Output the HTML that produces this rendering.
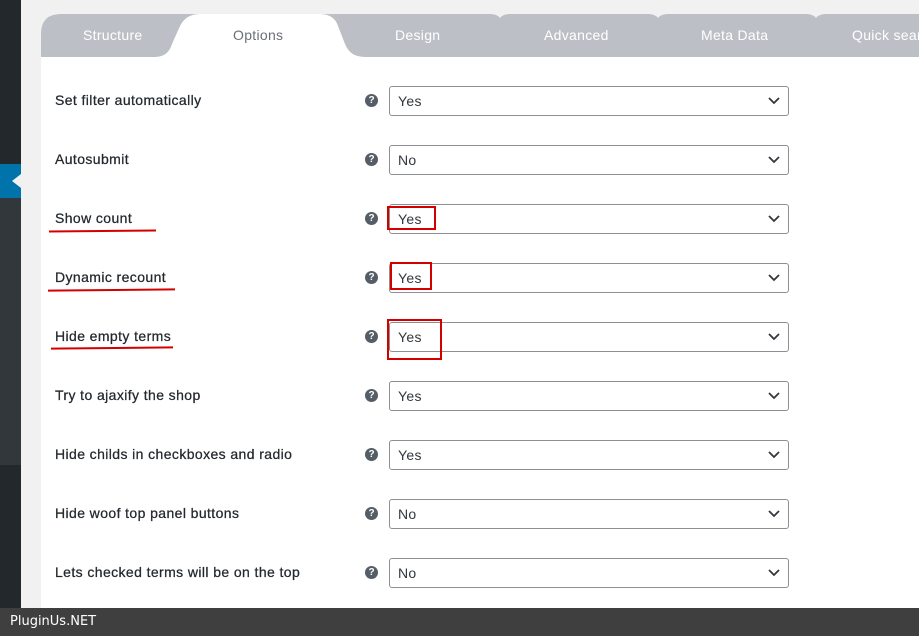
<!DOCTYPE html>
<html><head><style>
body{margin:0;width:919px;height:636px;position:relative;overflow:hidden;background:#f1f1f1;font-family:"Liberation Sans",sans-serif}
.sb{position:absolute;left:0;top:0;width:21px;height:608px;background:#23282d}
.sb2{position:absolute;left:0;top:198px;width:21px;height:267px;background:#32373c}
.act{position:absolute;left:0;top:164px;width:21px;height:34px;background:#0073aa}
.act:after{content:"";position:absolute;left:12px;top:10px;border-right:9px solid #f1f1f1;border-top:7px solid transparent;border-bottom:7px solid transparent}
.panel{position:absolute;left:41px;top:57px;width:878px;height:551px;background:#fff}
.row{position:absolute;left:0;width:919px;height:30px}
.lbl{position:absolute;left:55px;top:6px;font-size:14px;color:#23282d;letter-spacing:0.4px;-webkit-text-stroke:0.25px #23282d}
.q{position:absolute;left:365px;top:8px;width:13px;height:13px;border-radius:50%;background:#555d66;color:#fff;font-size:10px;font-weight:bold;text-align:center;line-height:13px}
.sel{position:absolute;left:389px;top:0;width:398px;height:28px;border:1px solid #8c8f94;border-radius:3px;background:#fff}
.sel span{position:absolute;left:8px;top:6px;font-size:14px;color:#32373c;letter-spacing:0.3px}
.sel svg{position:absolute;right:8px;top:10px}
.red{position:absolute;border:2px solid #d40000}
.ul{position:absolute;height:2px;background:#d40000;transform:rotate(-0.6deg)}
.tab{position:absolute;top:27px;font-size:14px;color:#fff;letter-spacing:0.3px}
.foot{position:absolute;left:0;top:608px;width:919px;height:28px;background:#3f3f3f;color:#fff;font-family:"DejaVu Sans",sans-serif;font-size:13px}
.foot span{position:absolute;left:10px;top:6px}
</style></head><body>
<div class="sb"></div><div class="sb2"></div><div class="act"></div>
<svg style="position:absolute;left:0;top:0" width="919" height="60">
<path d="M41 57 V34 Q41 14 61 14 H490 Q497 14 500 18 Q503 14 510 14 H648 Q655 14 658 18 Q661 14 668 14 H806 Q813 14 816 18 Q819 14 826 14 H919 V57 Z" fill="#bcc0c6"/>
<path d="M155 57 Q168 57 172 44 L180 26 Q186 14 200 14 H320 Q334 14 338 26 L345 44 Q350 57 365 57 Z" fill="#fff"/>
</svg>
<div class="tab" style="left:83px">Structure</div>
<div class="tab" style="left:233px;color:#6b6f75">Options</div>
<div class="tab" style="left:395px">Design</div>
<div class="tab" style="left:544px">Advanced</div>
<div class="tab" style="left:701px">Meta Data</div>
<div class="tab" style="left:852px;white-space:nowrap">Quick search</div>
<div class="panel"></div>

<div class="row" style="top:86px"><div class="lbl">Set filter automatically</div><div class="q">?</div><div class="sel"><span>Yes</span><svg width="12" height="8"><path d="M1 1 L6 6 L11 1" stroke="#32373c" stroke-width="1.8" fill="none"/></svg></div></div>
<div class="row" style="top:145px"><div class="lbl">Autosubmit</div><div class="q">?</div><div class="sel"><span>No</span><svg width="12" height="8"><path d="M1 1 L6 6 L11 1" stroke="#32373c" stroke-width="1.8" fill="none"/></svg></div></div>
<div class="row" style="top:204px"><div class="lbl">Show count</div><div class="q">?</div><div class="sel"><span>Yes</span><svg width="12" height="8"><path d="M1 1 L6 6 L11 1" stroke="#32373c" stroke-width="1.8" fill="none"/></svg></div></div>
<div class="row" style="top:263px"><div class="lbl">Dynamic recount</div><div class="q">?</div><div class="sel"><span>Yes</span><svg width="12" height="8"><path d="M1 1 L6 6 L11 1" stroke="#32373c" stroke-width="1.8" fill="none"/></svg></div></div>
<div class="row" style="top:322px"><div class="lbl">Hide empty terms</div><div class="q">?</div><div class="sel"><span>Yes</span><svg width="12" height="8"><path d="M1 1 L6 6 L11 1" stroke="#32373c" stroke-width="1.8" fill="none"/></svg></div></div>
<div class="row" style="top:381px"><div class="lbl">Try to ajaxify the shop</div><div class="q">?</div><div class="sel"><span>Yes</span><svg width="12" height="8"><path d="M1 1 L6 6 L11 1" stroke="#32373c" stroke-width="1.8" fill="none"/></svg></div></div>
<div class="row" style="top:440px"><div class="lbl">Hide childs in checkboxes and radio</div><div class="q">?</div><div class="sel"><span>Yes</span><svg width="12" height="8"><path d="M1 1 L6 6 L11 1" stroke="#32373c" stroke-width="1.8" fill="none"/></svg></div></div>
<div class="row" style="top:499px"><div class="lbl">Hide woof top panel buttons</div><div class="q">?</div><div class="sel"><span>No</span><svg width="12" height="8"><path d="M1 1 L6 6 L11 1" stroke="#32373c" stroke-width="1.8" fill="none"/></svg></div></div>
<div class="row" style="top:558px"><div class="lbl">Lets checked terms will be on the top</div><div class="q">?</div><div class="sel"><span>No</span><svg width="12" height="8"><path d="M1 1 L6 6 L11 1" stroke="#32373c" stroke-width="1.8" fill="none"/></svg></div></div>

<div class="red" style="left:387px;top:206px;width:45px;height:20px"></div>
<div class="red" style="left:390px;top:262px;width:38px;height:24px"></div>
<div class="red" style="left:387px;top:319px;width:51px;height:37px"></div>
<div class="ul" style="left:49px;top:230px;width:107px"></div>
<div class="ul" style="left:48px;top:289px;width:127px"></div>
<div class="ul" style="left:51px;top:347px;width:122px"></div>

<div class="foot"><span>PluginUs.NET</span></div>
</body></html>
